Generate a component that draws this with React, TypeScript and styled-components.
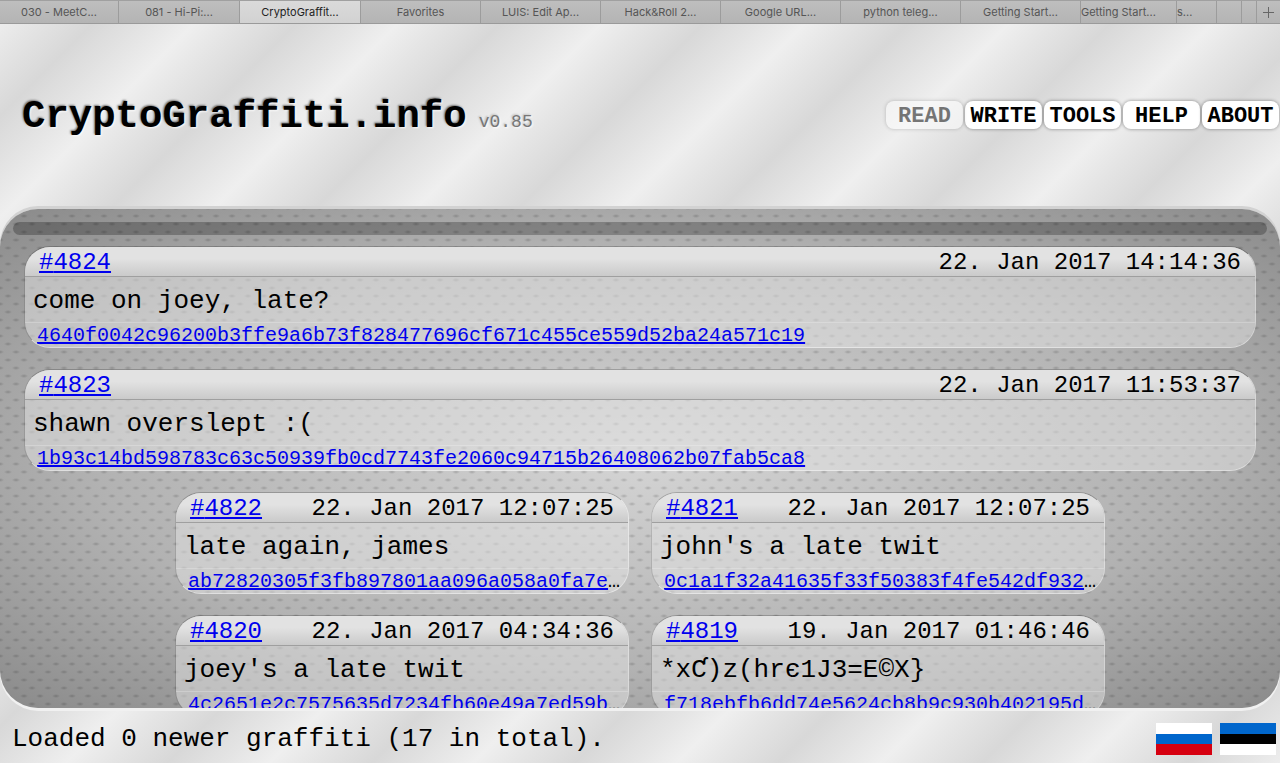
import React from "react";
import styled, { createGlobalStyle } from "styled-components";

const mono = `"Liberation Mono", "Courier New", Courier, "DejaVu Sans Mono", monospace`;

const GlobalStyle = createGlobalStyle`
  * { box-sizing: border-box; }
  body {
    margin: 0;
    color: #000;
    font-family: ${mono};
    background: #e4e4e4;
  }
  a { color: #0000ee; }
`;

const Page = styled.div`
  display: flex;
  flex-direction: column;
  height: 100vh;
  background: repeating-linear-gradient(
    135deg,
    #efefef 10px,
    #e5e5e5 40px,
    #d8d8d8 82px,
    #e5e5e5 124px,
    #efefef 154px
  );
`;

const TabBar = styled.nav`
  display: grid;
  grid-template-columns: 119fr 121fr 121fr repeat(6, 120fr) 96fr 40fr 25fr 15fr 23fr;
  height: 24px;
  flex: none;
  border-top: 1px solid #a0a0a0;
  border-bottom: 1px solid #9a9a9a;
  background: linear-gradient(#bebebe, #b4b4b4);
`;

const Tab = styled.button<{ $active?: boolean; $start?: boolean }>`
  min-width: 0;
  padding: 0;
  border: 0;
  border-right: 1px solid #9c9c9c;
  overflow: hidden;
  white-space: nowrap;
  text-align: ${(p) => (p.$start ? "left" : "center")};
  font: 11px/22px Inter, Roboto, "Liberation Sans", sans-serif;
  color: ${(p) => (p.$active ? "#222" : "#555")};
  background: ${(p) => (p.$active ? "linear-gradient(#dadada, #d2d2d2)" : "none")};
`;

const NewTab = styled.button`
  display: flex;
  align-items: center;
  justify-content: center;
  padding: 0;
  border: 0;
  background: none;
`;

const Header = styled.header`
  display: flex;
  flex: none;
  align-items: center;
  justify-content: space-between;
  height: 182px;
  padding: 0 1px 0 22px;
`;

const Brand = styled.div`
  display: flex;
  align-items: baseline;
  gap: 12px;
  padding-top: 4px;
  text-shadow: -1px -1px 2px rgba(0, 0, 0, 0.5), 1px 1px 2px #fff;
`;

const Title = styled.h1`
  margin: 0;
  font-size: 39px;
  line-height: 44px;
`;

const Version = styled.span`
  font-size: 18px;
  color: #777;
  text-shadow: -1px -1px 2px rgba(0, 0, 0, 0.2), 1px 1px 2px #fff;
`;

const Menu = styled.nav`
  display: flex;
  gap: 2px;
`;

const MenuButton = styled.button`
  width: 77px;
  height: 28px;
  padding: 3px 0 0;
  border: 0;
  border-radius: 8px;
  background: #fff;
  box-shadow: 0 0 3px 1px rgba(0, 0, 0, 0.25);
  color: #000;
  font: bold 22px/25px ${mono};

  &:disabled {
    opacity: 0.5;
  }
`;

const Panel = styled.main`
  flex: 1;
  min-height: 0;
  margin: 3px 0;
  padding: 13px 0 0;
  overflow: hidden;
  border-radius: 38px;
  box-shadow: 0 -3px 0 #d2d2d2, 0 3px 0 #f1f1f1;
  background:
    radial-gradient(ellipse 4px 2px, rgba(0, 0, 0, 0.18), transparent) 0 -1px / 16px 16px,
    radial-gradient(ellipse 4px 2px, rgba(0, 0, 0, 0.18), transparent) 8px 7px / 16px 16px,
    radial-gradient(ellipse farthest-corner, #d4d4d4, #b2b2b2 60%, #8a8a8a);
`;

const Progress = styled.div`
  height: 13px;
  margin: 0 13px 11px;
  border-radius: 7px;
  background: rgba(0, 0, 0, 0.25);
`;

const Feed = styled.div`
  display: flex;
  flex-wrap: wrap;
  justify-content: center;
  gap: 21px 22px;
  padding: 0 24px;
`;

const Card = styled.article<{ $wide?: boolean }>`
  flex: 0 0 ${(p) => (p.$wide ? "100%" : "454px")};
  overflow: hidden;
  border: 1px solid;
  border-color: rgba(0, 0, 0, 0.2) rgba(255, 255, 255, 0.55) rgba(255, 255, 255, 0.6)
    rgba(0, 0, 0, 0.1);
  border-radius: 26px;
  background: rgba(228, 228, 228, 0.5);
  background-clip: padding-box;
`;

const CardHead = styled.div`
  display: flex;
  justify-content: space-between;
  height: 30px;
  padding: 0 14px;
  border-bottom: 1px solid #9f9f9f;
  background: linear-gradient(#e2e2e2 40%, #cacaca);
  font-size: 24px;
  line-height: 31px;
`;

const Message = styled.p`
  height: 46px;
  margin: 0;
  padding: 2px 8px 0;
  border-bottom: 1px solid rgba(255, 255, 255, 0.22);
  font-size: 26px;
  line-height: 44px;
  white-space: nowrap;
`;

const Hash = styled.div`
  height: 24px;
  padding: 0 6px 0 12px;
  font-size: 20px;
  line-height: 26px;

  & > div {
    overflow: hidden;
    text-overflow: ellipsis;
    white-space: nowrap;
  }
`;

const Footer = styled.footer`
  display: flex;
  flex: none;
  align-items: center;
  justify-content: space-between;
  height: 52px;
  padding: 4px 4px 0 12px;
  font-size: 26px;
`;

const Languages = styled.div`
  display: flex;
  gap: 8px;
`;

const FlagButton = styled.button`
  display: flex;
  flex-direction: column;
  width: 56px;
  height: 32px;
  padding: 0;
  border: 0;
`;

const Stripe = styled.span<{ $color: string }>`
  flex: 1;
  width: 100%;
  background: ${(p) => p.$color};
`;

const tabs = [
  "030 - MeetC...",
  "081 - Hi-Pi:...",
  "CryptoGraffit...",
  "Favorites",
  "LUIS: Edit Ap...",
  "Hack&Roll 2...",
  "Google URL...",
  "python teleg...",
  "Getting Start...",
  "Getting Start...",
  "s...",
  "",
  "",
];

const menu = ["READ", "WRITE", "TOOLS", "HELP", "ABOUT"];

const graffiti = [
  {
    id: 4824,
    date: "22. Jan 2017 14:14:36",
    text: "come on joey, late?",
    hash: "4640f0042c96200b3ffe9a6b73f828477696cf671c455ce559d52ba24a571c19",
    wide: true,
  },
  {
    id: 4823,
    date: "22. Jan 2017 11:53:37",
    text: "shawn overslept :(",
    hash: "1b93c14bd598783c63c50939fb0cd7743fe2060c94715b26408062b07fab5ca8",
    wide: true,
  },
  {
    id: 4822,
    date: "22. Jan 2017 12:07:25",
    text: "late again, james",
    hash: "ab72820305f3fb897801aa096a058a0fa7e41c",
  },
  {
    id: 4821,
    date: "22. Jan 2017 12:07:25",
    text: "john's a late twit",
    hash: "0c1a1f32a41635f33f50383f4fe542df9327b0",
  },
  {
    id: 4820,
    date: "22. Jan 2017 04:34:36",
    text: "joey's a late twit",
    hash: "4c2651e2c7575635d7234fb60e49a7ed59b2e8",
  },
  {
    id: 4819,
    date: "19. Jan 2017 01:46:46",
    text: "*xƇ)z(hrє1J3=E©X}",
    hash: "f718ebfb6dd74e5624cb8b9c930b402195d6a3",
  },
];

const languages = [
  { name: "Русский", stripes: ["#ffffff", "#0066cc", "#d60010"] },
  { name: "Eesti", stripes: ["#0066cc", "#000000", "#ffffff"] },
];

export default function App() {
  return (
    <Page>
      <GlobalStyle />
      <TabBar>
        {tabs.map((label, i) => (
          <Tab key={i} $active={i === 2} $start={i > 8}>
            {label}
          </Tab>
        ))}
        <NewTab aria-label="New tab">
          <svg width="11" height="11" viewBox="0 0 11 11" stroke="#666" fill="none">
            <path d="M5.5 0v11M0 5.5h11" />
          </svg>
        </NewTab>
      </TabBar>

      <Header>
        <Brand>
          <Title>CryptoGraffiti.info</Title>
          <Version>v0.85</Version>
        </Brand>
        <Menu>
          {menu.map((item) => (
            <MenuButton key={item} disabled={item === "READ"}>
              {item}
            </MenuButton>
          ))}
        </Menu>
      </Header>

      <Panel>
        <Progress />
        <Feed>
          {graffiti.map((g) => (
            <Card key={g.id} $wide={g.wide}>
              <CardHead>
                <a href={`#${g.id}`}>#{g.id}</a>
                <time>{g.date}</time>
              </CardHead>
              <Message>{g.text}</Message>
              <Hash>
                <div>
                  <a href={`#tx-${g.hash}`}>{g.hash}</a>
                </div>
              </Hash>
            </Card>
          ))}
        </Feed>
      </Panel>

      <Footer>
        <span>Loaded 0 newer graffiti (17 in total).</span>
        <Languages>
          {languages.map((lang) => (
            <FlagButton key={lang.name} aria-label={lang.name}>
              {lang.stripes.map((color) => (
                <Stripe key={color} $color={color} />
              ))}
            </FlagButton>
          ))}
        </Languages>
      </Footer>
    </Page>
  );
}
